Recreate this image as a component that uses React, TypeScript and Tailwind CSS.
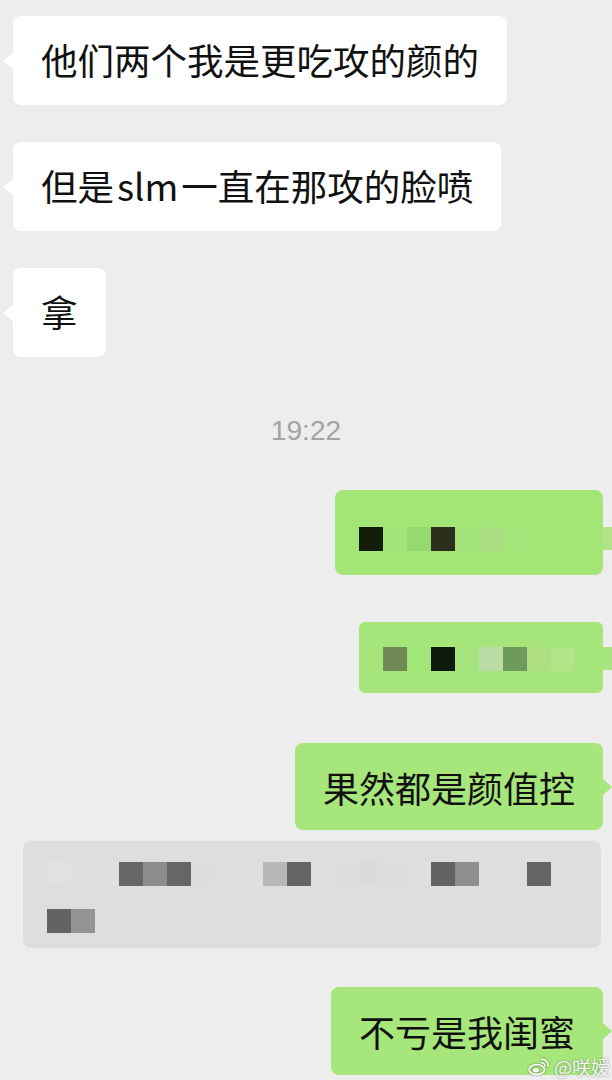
const GREEN_ROW_1 = [
  'bg-[#a4e577]',
  'bg-[#141c0a]',
  'bg-[#a3e479]',
  'bg-[#96d96c]',
  'bg-[#2d2f1d]',
  'bg-[#a2e279]',
  'bg-[#addd83]',
  'bg-[#a4e57a]',
];

const GREEN_ROW_2 = [
  'bg-[#a6e47a]',
  'bg-[#6f8a55]',
  'bg-[#a0e777]',
  'bg-[#0e1a0e]',
  'bg-[#a5e47c]',
  'bg-[#bcdca6]',
  'bg-[#6e9a5c]',
  'bg-[#aee081]',
  'bg-[#b2e587]',
];

const GRAY_ROW_1 = [
  'bg-[#dedede]',
  'bg-[#e1e1e1]',
  'bg-[#e0e0e0]',
  'bg-[#e0e0e0]',
  'bg-[#666666]',
  'bg-[#8c8c8c]',
  'bg-[#666666]',
  'bg-[#dddddd]',
  'bg-[#dedede]',
  'bg-[#e0e0e0]',
  'bg-[#b8b8b8]',
  'bg-[#646464]',
  'bg-[#dedede]',
  'bg-[#dddddd]',
  'bg-[#dbdbdb]',
  'bg-[#dcdcdc]',
  'bg-[#dfdfdf]',
  'bg-[#636363]',
  'bg-[#8e8e8e]',
  'bg-[#e0e0e0]',
  'bg-[#dedede]',
  'bg-[#646464]',
];

const GRAY_ROW_2 = ['bg-[#dedede]', 'bg-[#636363]', 'bg-[#949494]'];

const Cells = ({ colors }: { colors: string[] }) => (
  <div className="flex">
    {colors.map((c, i) => (
      <div key={i} className={`w-[24px] h-[24px] ${c}`} />
    ))}
  </div>
);

const LeftBubble = ({ children, className = '' }: { children: React.ReactNode; className?: string }) => (
  <div className={`flex items-center pl-[3px] ${className}`}>
    <div className="w-0 h-0 border-y-[8px] border-y-transparent border-r-[10px] border-r-white" />
    <div className="h-[89px] flex items-center bg-white rounded-[8px] px-[28px] text-[36.5px] leading-none text-[#111111] whitespace-nowrap">
      {children}
    </div>
  </div>
);

const RightBubble = ({ text, className = '', h }: { text: string; className?: string; h: string }) => (
  <div className={`flex items-center justify-end ${className}`}>
    <div className={`${h} flex items-center bg-[#a6e67b] rounded-[8px] px-[28px] text-[36px] leading-none text-[#111111] whitespace-nowrap`}>
      {text}
    </div>
    <div className="w-0 h-0 border-y-[8px] border-y-transparent border-l-[9px] border-l-[#a6e67b]" />
  </div>
);

const WeiboLogo = () => (
  <svg width="21" height="17" viewBox="0 0 24 20" className="drop-shadow-[0_0_1px_rgba(0,0,0,0.45)]">
    <ellipse cx="10" cy="13.5" rx="9" ry="5.8" fill="none" stroke="#ffffff" strokeWidth="1.9" />
    <ellipse cx="9" cy="14.5" rx="3.6" ry="2.6" fill="#ffffff" />
    <path d="M15.5 5.5 a4 4 0 0 1 4 4" fill="none" stroke="#ffffff" strokeWidth="1.8" strokeLinecap="round" />
    <path d="M15.5 1.5 a8 8 0 0 1 8 8" fill="none" stroke="#ffffff" strokeWidth="1.8" strokeLinecap="round" />
  </svg>
);

export default function App() {
  return (
    <div className="relative w-[612px] h-[1080px] overflow-hidden bg-[#ededed] font-['Noto_Sans_CJK_SC',sans-serif]">
      <div className="flex flex-col pt-[16px]">
        <LeftBubble>他们两个我是更吃攻的颜的</LeftBubble>
        <LeftBubble className="mt-[37px]">
          但是<span className="mx-[3px]">slm</span>一直在那攻的脸喷
        </LeftBubble>
        <LeftBubble className="mt-[37px]">拿</LeftBubble>

        <div className="mt-[60px] h-[28px] text-center text-[28px] leading-[28px] text-[#a3a3a3] font-['Liberation_Sans',sans-serif]">
          19:22
        </div>

        {/* mosaic bubbles */}
        <div className="mt-[45px] flex items-start justify-end">
          <div className="w-[268px] h-[85px] bg-[#a4e577] rounded-[8px] pt-[37px] overflow-hidden">
            <Cells colors={GREEN_ROW_1} />
          </div>
          <div className="mt-[37px] w-[9px] h-[23px] bg-[#b2e38a]" />
        </div>

        <div className="mt-[47px] flex items-start justify-end">
          <div className="w-[244px] h-[71px] bg-[#a6e57a] rounded-[6px] pt-[25px] overflow-hidden">
            <Cells colors={GREEN_ROW_2} />
          </div>
          <div className="mt-[25px] w-[9px] h-[23px] bg-[#a8e47f]" />
        </div>

        <RightBubble text="果然都是颜值控" h="h-[87px]" className="mt-[50px]" />

        <div className="mt-[11px] ml-[23px] w-[578px] h-[107px] bg-[#dedede] rounded-[8px] pt-[21px] overflow-hidden flex flex-col gap-[23px]">
          <Cells colors={GRAY_ROW_1} />
          <Cells colors={GRAY_ROW_2} />
        </div>

        <RightBubble text="不亏是我闺蜜" h="h-[88px]" className="mt-[39px]" />
      </div>

      <div className="absolute right-[2px] bottom-[4px] flex items-center gap-[5px]">
        <WeiboLogo />
        <span className="text-[19px] leading-none text-[#f7f7f7] [text-shadow:0_0_2px_rgba(0,0,0,0.45)]">
          @咲嫒
        </span>
      </div>
    </div>
  );
}
